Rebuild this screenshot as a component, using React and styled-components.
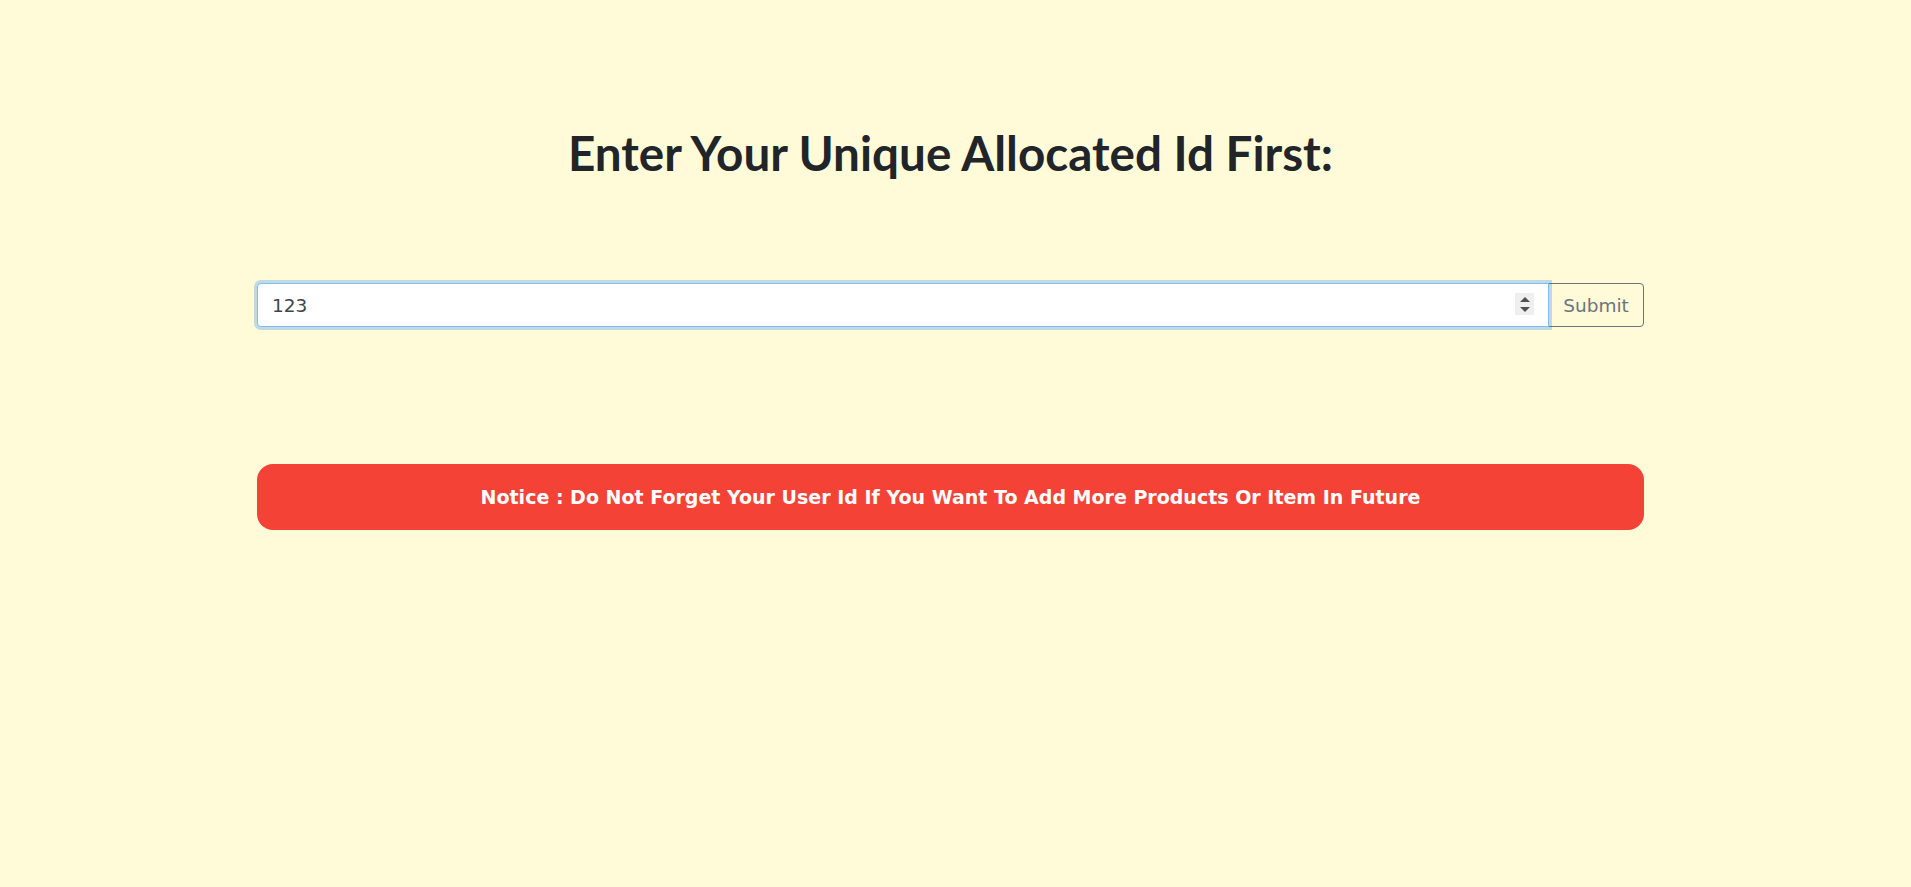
import React from 'react';
import styled, { createGlobalStyle } from 'styled-components';

const GlobalStyle = createGlobalStyle`
    body {
        margin: 0;
        background: #fffad7;
        font-family: "DejaVu Sans", Verdana, sans-serif;
        color: #212529;
    }
`;

const Page = styled.div`
    padding: 0 267px 0 257px;
    min-height: 887px;
    box-sizing: border-box;
`;

const Title = styled.h1`
    margin: 0;
    padding-top: 124px;
    text-align: center;
    font-family: Lato, "Open Sans", sans-serif;
    font-weight: 700;
    font-size: 47.6px;
    line-height: 1.2;
    color: #212529;
`;

const IdForm = styled.form`
    display: flex;
    margin-top: 102px;
    height: 44px;
`;

const InputWrap = styled.div`
    flex: 1;
    position: relative;
    display: flex;
    z-index: 2;
`;

const IdInput = styled.input`
    flex: 1;
    min-width: 0;
    box-sizing: border-box;
    height: 44px;
    padding: 0 44px 0 14px;
    font-family: "DejaVu Sans", Verdana, sans-serif;
    font-size: 18.5px;
    color: #3f454b;
    background: #fff;
    border: 1px solid ${({focused}) => focused ? "#80bdff" : "#ced4da"};
    border-radius: 4px 0 0 4px;
    outline: none;
    box-shadow: ${({focused}) => focused ? "0 0 0 3px rgba(0, 123, 255, 0.25)" : "none"};
    -moz-appearance: textfield;

    &::-webkit-inner-spin-button,
    &::-webkit-outer-spin-button {
        -webkit-appearance: none;
        margin: 0;
    }
`;

const Spinner = styled.div`
    position: absolute;
    right: 15px;
    top: 10px;
    width: 19px;
    height: 22px;
    background: #efefef;
    display: flex;
    flex-direction: column;
    align-items: center;
    justify-content: center;
    gap: 5px;
    pointer-events: none;
`;

const Arrow = styled.span`
    width: 0;
    height: 0;
    border-left: 5px solid transparent;
    border-right: 5px solid transparent;
    border-${({down}) => down ? "top" : "bottom"}: 5px solid #505050;
`;

const SubmitButton = styled.button`
    width: 96px;
    height: 44px;
    margin-left: -1px;
    font-family: "DejaVu Sans", Verdana, sans-serif;
    font-size: 18.5px;
    color: #6c757d;
    background: transparent;
    border: 1px solid #6c757d;
    border-radius: 0 4px 4px 0;
    cursor: pointer;
`;

const Notice = styled.div`
    margin-top: 137px;
    height: 66px;
    display: flex;
    align-items: center;
    justify-content: center;
    background: #f44336;
    border-radius: 16px;
    color: #fff;
    font-family: "DejaVu Sans", Verdana, sans-serif;
    font-weight: 700;
    font-size: 19px;
`;

const App = () => {
    return (
        <Page>
            <GlobalStyle />
            <Title>Enter Your Unique Allocated Id First:</Title>
            <IdForm onSubmit={(e) => e.preventDefault()}>
                <InputWrap>
                    <IdInput type="number" defaultValue="123" focused autoFocus />
                    <Spinner>
                        <Arrow />
                        <Arrow down />
                    </Spinner>
                </InputWrap>
                <SubmitButton type="submit">Submit</SubmitButton>
            </IdForm>
            <Notice>Notice : Do Not Forget Your User Id If You Want To Add More Products Or Item In Future</Notice>
        </Page>
    );
};

export default App;
